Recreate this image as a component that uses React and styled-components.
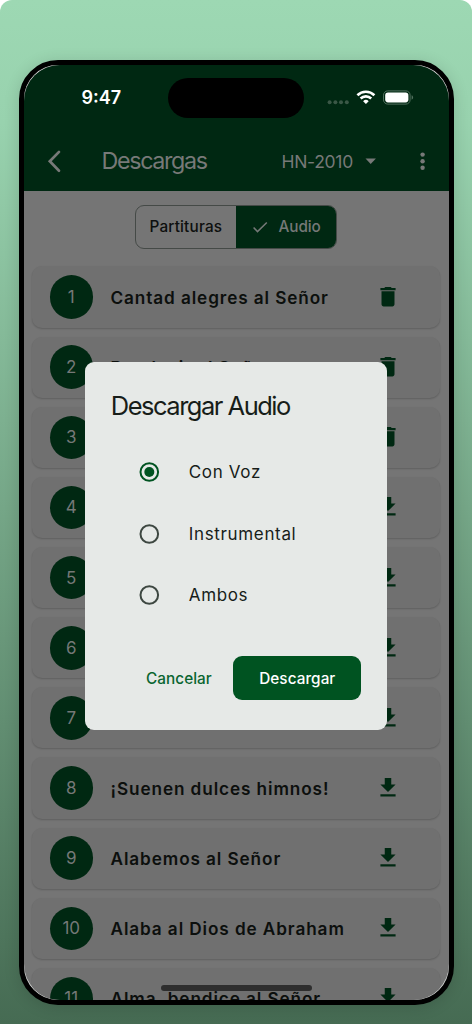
import React from 'react';
import styled, { createGlobalStyle } from 'styled-components';

const GlobalStyle = createGlobalStyle`
  * {
    box-sizing: border-box;
  }
  body {
    margin: 0;
    background: #fff;
    font-family: Inter, sans-serif;
  }
  button {
    font-family: inherit;
    border: 0;
    padding: 0;
    background: none;
  }
`;
const Stage = styled.main`
  height: 1024px;
  padding: 60px 18.5px 0;
  overflow: hidden;
  border-radius: 12px 12px 0 0;
  background: linear-gradient(180deg, #9dd8b3 0%, #98d2ae 12%, #466b53 100%);
`;
const Phone = styled.div`
  position: relative;
  height: 944.5px;
  border: 5px solid #000;
  border-radius: 39px;
  background: #d4d6d5;
  box-shadow: 0 2px 16px rgba(0, 0, 0, 0.14);
`;
const Screen = styled.div`
  height: 100%;
  overflow: hidden;
  border-radius: 36px;
  background: #757575;
`;
const Header = styled.header`
  height: 126.4px;
  background: #002812;
`;
const StatusBar = styled.div`
  display: flex;
  height: 66px;
  padding: 13px 34px 0 58px;
`;
const Clock = styled.span`
  flex: none;
  width: 86.5px;
  padding-top: 7px;
  color: #fff;
  font-size: 18px;
  font-weight: 600;
  line-height: 26px;
`;
const Island = styled.div`
  flex: none;
  width: 135.5px;
  height: 40px;
  border-radius: 20px;
  background: #000;
`;
const StatusIcons = styled.svg`
  flex: none;
  width: 90px;
  height: 20px;
  margin: 9px 0 0 21.5px;
`;
const AppBar = styled.div`
  display: flex;
  align-items: center;
  height: 60px;
  color: #777978;
`;
const Glyph = styled.svg`
  flex: none;
  display: block;
  width: ${p => p.$size || 24}px;
  height: ${p => p.$size || 24}px;
`;
const BackButton = styled.button`
  width: 78px;
  padding-left: 18px;
  color: inherit;
`;
const Title = styled.h1`
  width: 180px;
  margin: 0;
  font-size: 23.3px;
  font-weight: 400;
  line-height: 32px;
  letter-spacing: -1.35px;
`;
const Book = styled.div`
  display: flex;
  align-items: center;
  width: 128px;
  gap: 6px;
  font-size: 17.5px;
  letter-spacing: -0.3px;
`;
const Segments = styled.div`
  display: flex;
  width: 201.5px;
  height: 44px;
  margin: 13.5px 0 0 111.5px;
  overflow: hidden;
  border: 1px solid #454a47;
  border-radius: 9px;
`;
const Segment = styled.button`
  display: flex;
  align-items: center;
  justify-content: center;
  gap: 10px;
  width: 99.75px;
  flex: none;
  color: ${p => (p.$active ? '#757877' : '#0d0f0e')};
  background: ${p => (p.$active ? '#002812' : 'transparent')};
  font-size: 15.3px;
  font-weight: 500;
  letter-spacing: ${p => (p.$active ? '-0.1px' : '0.2px')};
`;
const List = styled.ul`
  display: flex;
  flex-direction: column;
  gap: 9px;
  margin: 0;
  padding: 17.6px 8.5px 0 8px;
  list-style: none;
`;
const Row = styled.li`
  display: flex;
  flex: none;
  align-items: center;
  height: 61.15px;
  padding-left: 18px;
  border-radius: 10px;
  background: #707070;
  color: #002812;
  box-shadow: 0 1px 2px rgba(0, 0, 0, 0.2);
`;
const Circle = styled.span`
  display: flex;
  align-items: center;
  justify-content: center;
  flex: none;
  width: 43.5px;
  height: 43.5px;
  border-radius: 50%;
  background: #002812;
  color: #757877;
  font-size: 17px;
`;
const Hymn = styled.span`
  flex: none;
  width: 281.5px;
  padding-left: 17.5px;
  color: #0c0f0d;
  font-size: 17.2px;
  font-weight: 600;
  letter-spacing: 0.9px;
  white-space: nowrap;
`;
const HomeIndicator = styled.div`
  position: absolute;
  left: 137px;
  bottom: 9px;
  width: 151px;
  height: 5.5px;
  border-radius: 3px;
  background: #2e2e2e;
`;
const Dialog = styled.section`
  position: absolute;
  left: 61.3px;
  top: 297px;
  width: 302.5px;
  height: 368.3px;
  padding: 26px 26px 0;
  border-radius: 9px;
  background: #e6e9e7;
  color: #171d19;
`;
const DialogTitle = styled.h2`
  margin: 0;
  font-size: 25.5px;
  font-weight: 400;
  line-height: 35px;
  letter-spacing: -1.5px;
  white-space: nowrap;
`;
const Options = styled.div`
  padding: 18.4px 0 0 26.5px;
`;
const Option = styled.label`
  display: flex;
  align-items: center;
  gap: 27.5px;
  height: 61.5px;
  color: ${p => (p.$checked ? '#005321' : '#3d4741')};
`;
const OptionText = styled.span`
  color: #171d19;
  font-size: 17px;
  letter-spacing: 0.65px;
`;
const Actions = styled.div`
  display: flex;
  align-items: center;
  justify-content: flex-end;
  margin-top: 30px;
  gap: 21.5px;
`;
const Cancel = styled.button`
  padding-top: 1px;
  color: #0a6530;
  font-size: 15.3px;
  font-weight: 500;
  letter-spacing: 0.05px;
`;
const Confirm = styled.button`
  width: 128px;
  height: 44px;
  padding-top: 1px;
  border-radius: 9px;
  background: #005321;
  color: #fff;
  font-size: 15.3px;
  font-weight: 500;
  letter-spacing: 0.05px;
`;

const hymns = [
  { title: 'Cantad alegres al Señor', saved: true },
  { title: 'Bendecir al Señor', saved: true },
  { title: 'Santo, Santo, Santo', saved: true },
  { title: 'Load al Padre' },
  { title: 'Gloria a Dios' },
  { title: 'Al Rey adorad' },
  { title: 'Load al Señor' },
  { title: '¡Suenen dulces himnos!' },
  { title: 'Alabemos al Señor' },
  { title: 'Alaba al Dios de Abraham' },
  { title: 'Alma, bendice al Señor' },
];
const options = ['Con Voz', 'Instrumental', 'Ambos'];

const RowIcon = ({ saved }) => (
  <Glyph viewBox="0 0.2 24 24" $size={26} fill="currentColor">
    {saved ? (
      <path d="M6 19c0 1.1.9 2 2 2h8c1.1 0 2-.9 2-2V7H6v12zM19 4h-3.5l-1-1h-5l-1 1H5v2h14V4z" />
    ) : (
      <path d="M19 9h-4V3H9v6H5l7 7 7-7zM5 18v2h14v-2H5z" />
    )}
  </Glyph>
);

const Radio = ({ checked }) => (
  <Glyph viewBox="0 0 24 24">
    <circle cx="12.3" cy="12" r="8.8" fill="none" stroke="currentColor" strokeWidth="2" />
    {checked && <circle cx="12.3" cy="12" r="5" fill="currentColor" />}
  </Glyph>
);

const Status = () => (
  <StatusIcons viewBox="0 0 90 20">
    <g fill="#3a5746">
      <circle cx="4.6" cy="15.2" r="2" />
      <circle cx="10.4" cy="15.2" r="2" />
      <circle cx="16" cy="15.2" r="2" />
      <circle cx="21.8" cy="15.2" r="2" />
    </g>
    <g fill="none" stroke="#fff" strokeWidth="2.6">
      <path d="M32.4 8.2a12.2 12.2 0 0 1 17 0" />
      <path d="M35.6 11.5a7.6 7.6 0 0 1 10.6 0" />
    </g>
    <path d="M40.9 17l-2.8-2.8a4 4 0 0 1 5.6 0z" fill="#fff" />
    <rect x="58.5" y="3.9" width="26.6" height="13.2" rx="4.2" fill="none" stroke="#51705e" />
    <rect x="60.2" y="5.6" width="23.2" height="9.8" rx="2.8" fill="#fff" />
    <path d="M86.6 8.3c2 .7 2 3.7 0 4.4z" fill="#51705e" />
  </StatusIcons>
);

const DownloadDialog = () => (
  <Dialog>
    <DialogTitle>Descargar Audio</DialogTitle>
    <Options>
      {options.map((label, i) => (
        <Option key={label} $checked={i === 0}>
          <Radio checked={i === 0} />
          <OptionText>{label}</OptionText>
        </Option>
      ))}
    </Options>
    <Actions>
      <Cancel>Cancelar</Cancel>
      <Confirm>Descargar</Confirm>
    </Actions>
  </Dialog>
);

const App = () => (
  <>
    <GlobalStyle />
    <Stage>
      <Phone>
        <Screen>
          <Header>
            <StatusBar>
              <Clock>9:47</Clock>
              <Island />
              <Status />
            </StatusBar>
            <AppBar>
              <BackButton>
                <Glyph viewBox="0 0 24 24">
                  <path d="M17 2.9L7.8 12.3l9.2 9.4" fill="none" stroke="currentColor" strokeWidth="2.7" strokeLinecap="round" />
                </Glyph>
              </BackButton>
              <Title>Descargas</Title>
              <Book>
                HN-2010
                <Glyph viewBox="0 0 24 24">
                  <path d="M6.5 9.6h10.4L11.7 15z" fill="currentColor" />
                </Glyph>
              </Book>
              <Glyph viewBox="0 0 24 24" fill="currentColor">
                <circle cx="12.6" cy="5.6" r="2.2" />
                <circle cx="12.6" cy="12.2" r="2.2" />
                <circle cx="12.6" cy="18.7" r="2.2" />
              </Glyph>
            </AppBar>
          </Header>
          <Segments>
            <Segment>Partituras</Segment>
            <Segment $active>
              <Glyph viewBox="0 0 18 18" $size={18}>
                <path d="M2.6 9.6l3.9 4L15.8 4.5" fill="none" stroke="currentColor" strokeWidth="1.5" />
              </Glyph>
              Audio
            </Segment>
          </Segments>
          <List>
            {hymns.map((hymn, i) => (
              <Row key={hymn.title}>
                <Circle>{i + 1}</Circle>
                <Hymn>{hymn.title}</Hymn>
                <RowIcon saved={hymn.saved} />
              </Row>
            ))}
          </List>
        </Screen>
        <HomeIndicator />
        <DownloadDialog />
      </Phone>
    </Stage>
  </>
);

export default App;
